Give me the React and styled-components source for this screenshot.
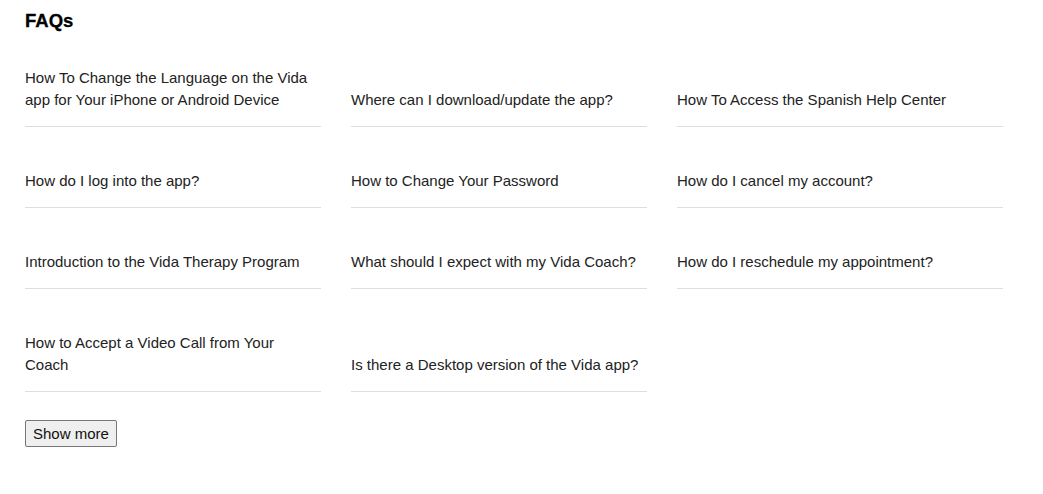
import React from "react";
import styled, { createGlobalStyle } from "styled-components";

const GlobalStyle = createGlobalStyle`
  html, body { margin: 0; padding: 0; background: #fff; }
  body { font-family: "Liberation Sans", Arial, sans-serif; }
`;

const Page = styled.div`
  padding: 9px 25px 40px;
`;

const Heading = styled.h2`
  margin: 0;
  font-size: 18.5px;
  line-height: 23px;
  font-weight: 700;
  color: #000;
  -webkit-text-stroke: 0.3px #000;
`;

const Grid = styled.div`
  display: grid;
  grid-template-columns: 296px 296px 326px;
  column-gap: 30px;
  row-gap: 8px;
`;

const Item = styled.a`
  display: flex;
  align-items: flex-end;
  padding: 35px 0 15px;
  border-bottom: 1px solid #dedede;
  font-size: 15px;
  line-height: 22px;
  color: #222;
  text-decoration: none;
`;

const Button = styled.button`
  margin-top: 28px;
  height: 27px;
  padding: 0 7px;
  font-family: "Liberation Sans", Arial, sans-serif;
  font-size: 15px;
  color: #111;
  background: #efefef;
  border: 1px solid #767676;
  border-radius: 2px;
`;

const faqs = [
  "How To Change the Language on the Vida app for Your iPhone or Android Device",
  "Where can I download/update the app?",
  "How To Access the Spanish Help Center",
  "How do I log into the app?",
  "How to Change Your Password",
  "How do I cancel my account?",
  "Introduction to the Vida Therapy Program",
  "What should I expect with my Vida Coach?",
  "How do I reschedule my appointment?",
  "How to Accept a Video Call from Your Coach",
  "Is there a Desktop version of the Vida app?",
];

export default function App() {
  return (
    <>
      <GlobalStyle />
      <Page>
        <Heading>FAQs</Heading>
        <Grid>
          {faqs.map((q) => (
            <Item key={q} href="#">
              {q}
            </Item>
          ))}
        </Grid>
        <Button>Show more</Button>
      </Page>
    </>
  );
}
